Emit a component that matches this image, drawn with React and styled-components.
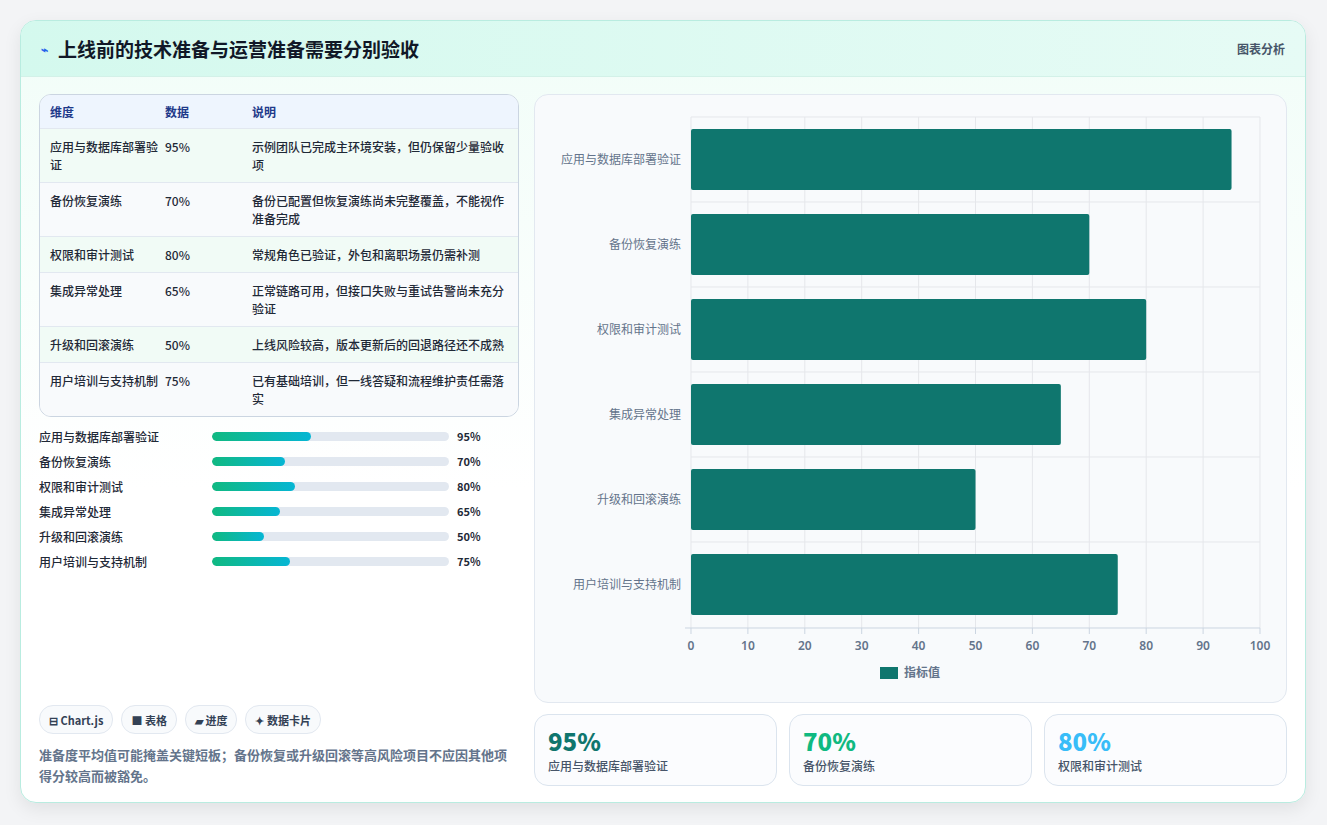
import React from "react";
import styled, { createGlobalStyle } from "styled-components";

const G = createGlobalStyle`
  body{margin:0;background:#f3f4f6;font-family:"Noto Sans CJK SC","Noto Sans",sans-serif;}
`;
const rows = [
  ["应用与数据库部署验证", 95, "示例团队已完成主环境安装，但仍保留少量验收项"],
  ["备份恢复演练", 70, "备份已配置但恢复演练尚未完整覆盖，不能视作准备完成"],
  ["权限和审计测试", 80, "常规角色已验证，外包和离职场景仍需补测"],
  ["集成异常处理", 65, "正常链路可用，但接口失败与重试告警尚未充分验证"],
  ["升级和回滚演练", 50, "上线风险较高，版本更新后的回退路径还不成熟"],
  ["用户培训与支持机制", 75, "已有基础培训，但一线答疑和流程维护责任需落实"],
];
const Page = styled.div`padding:20px 20px 22px 20px;height:825px;box-sizing:border-box;`;
const Card = styled.div`width:1286px;height:783px;box-sizing:border-box;border:1px solid #b9ece0;border-radius:16px;background:linear-gradient(180deg,#f1fdf8,#ffffff 60%);box-shadow:0 6px 18px rgba(0,0,0,.08);overflow:hidden;display:flex;flex-direction:column;`;
const Header = styled.div`height:55px;flex:none;display:flex;align-items:center;justify-content:space-between;padding:0 20px;background:linear-gradient(90deg,#d4f9ee,#e6fbf5);border-bottom:1px solid #d3f1e8;`;
const Title = styled.h1`margin:0;font-size:19px;font-weight:700;color:#111827;display:flex;align-items:center;gap:10px;`;
const Tag = styled.span`font-size:12px;color:#475569;font-weight:600;`;
const Body = styled.div`flex:1;display:flex;gap:15px;padding:17px 18px 18px 18px;`;
const Left = styled.div`width:482px;display:flex;flex-direction:column;`;
const Right = styled.div`flex:1;display:flex;flex-direction:column;gap:11px;`;
const Table = styled.div`border:1px solid #cbd5e1;border-radius:12px;overflow:hidden;background:#f8fafc;`;
const Row = styled.div`display:grid;grid-template-columns:115px 87px 1fr;padding:${p=>p.h?"8px 10px 7px":"9px 10px 8px"};font-size:12px;line-height:18px;color:${p=>p.h?"#1e3a8a":"#1f2937"};font-weight:${p=>p.h?600:500};background:${p=>p.h?"#eef5fe":p.i%2?"#f8fafc":"#f1fbf6"};border-top:${p=>p.h?"none":"1px solid #e2e8f0"};`;
const Prog = styled.div`display:flex;flex-direction:column;gap:7px;margin-top:10px;`;
const PRow = styled.div`display:grid;grid-template-columns:173px 237px 1fr;align-items:center;gap:0;font-size:12px;color:#1f2937;font-weight:500;height:18px;`;
const Track = styled.div`height:9px;border-radius:5px;background:#e2e8f0;overflow:hidden;`;
const Fill = styled.div`height:100%;border-radius:5px;background:linear-gradient(90deg,#10b981,#06b6d4);`;
const Pct = styled.span`padding-left:8px;font-weight:700;font-size:11px;`;
const Chips = styled.div`margin-top:auto;display:flex;gap:8px;`;
const Chip = styled.span`height:27px;padding:0 9px;border:1px solid #e2e8f0;border-radius:14px;background:#f8fafc;font-size:11px;font-weight:700;color:#334155;display:flex;align-items:center;gap:4px;`;
const Note = styled.p`margin:10px 0 0;font-size:13px;line-height:21px;color:#64748b;font-weight:600;`;
const ChartBox = styled.div`height:607px;border:1px solid #e2e8f0;border-radius:14px;background:#f8fafc;`;
const Kpis = styled.div`display:flex;gap:12px;`;
const Kpi = styled.div`flex:1;height:72px;box-sizing:border-box;border:1px solid #dbe4ee;border-radius:14px;background:#fbfcfe;padding:10px 13px;`;
const KV = styled.div`font-size:24px;font-weight:800;color:${p=>p.c};line-height:32px;`;
const KL = styled.div`font-size:12px;color:#475569;font-weight:500;`;

function Chart(){
  const x0=156,w=569,y0=22,band=85;
  return (
    <svg width="751" height="607" style={{display:"block"}}>
      {Array.from({length:11},(_,i)=>{const x=x0+i*w/10;return <g key={i}><line x1={x} x2={x} y1={y0} y2={533} stroke="#e5e7eb"/><line x1={x} x2={x} y1={533} y2={539} stroke="#cbd5e1"/><text x={x} y={555} textAnchor="middle" fontSize="12" fill="#64748b" fontFamily="Noto Sans" fontWeight="600">{i*10}</text></g>;})}
      {rows.map((r,i)=>{const yt=y0+i*band;return <g key={i}>
        <line x1={x0} x2={x0+w} y1={yt} y2={yt} stroke="#e5e7eb"/>
        <rect x={x0} y={yt+12} width={w*r[1]/100} height={61} rx="2" fill="#0f766e"/>
        <text x={x0-10} y={yt+47} textAnchor="end" fontSize="12" fill="#64748b">{r[0]}</text></g>;})}
      <line x1={x0-6} x2={x0+w} y1={533} y2={533} stroke="#cbd5e1"/>
      <rect x="345" y="572" width="18" height="12" fill="#0f766e"/>
      <text x="369" y="582" fontSize="12" fill="#64748b" fontWeight="600">指标值</text>
    </svg>
  );
}

export default function App(){
  return <Page><G/><Card>
    <Header><Title><span style={{fontSize:12,color:"#2563eb"}}>⌁</span>上线前的技术准备与运营准备需要分别验收</Title><Tag>图表分析</Tag></Header>
    <Body>
      <Left>
        <Table>
          <Row h><span>维度</span><span>数据</span><span>说明</span></Row>
          {rows.map((r,i)=><Row key={i} i={i}><span>{r[0]}</span><span>{r[1]}%</span><span>{r[2]}</span></Row>)}
        </Table>
        <Prog>{rows.map((r,i)=><PRow key={i}><span>{r[0]}</span><Track><Fill style={{width:`${r[1]*0.44}%`}}/></Track><Pct>{r[1]}%</Pct></PRow>)}</Prog>
        <Chips><Chip>⊟ Chart.js</Chip><Chip>■ 表格</Chip><Chip>▰ 进度</Chip><Chip>✦ 数据卡片</Chip></Chips>
        <Note>准备度平均值可能掩盖关键短板；备份恢复或升级回滚等高风险项目不应因其他项得分较高而被豁免。</Note>
      </Left>
      <Right>
        <ChartBox><Chart/></ChartBox>
        <Kpis>
          <Kpi><KV c="#0f766e">95%</KV><KL>应用与数据库部署验证</KL></Kpi>
          <Kpi><KV c="#10b981">70%</KV><KL>备份恢复演练</KL></Kpi>
          <Kpi><KV c="#38bdf8">80%</KV><KL>权限和审计测试</KL></Kpi>
        </Kpis>
      </Right>
    </Body>
  </Card></Page>;
}
